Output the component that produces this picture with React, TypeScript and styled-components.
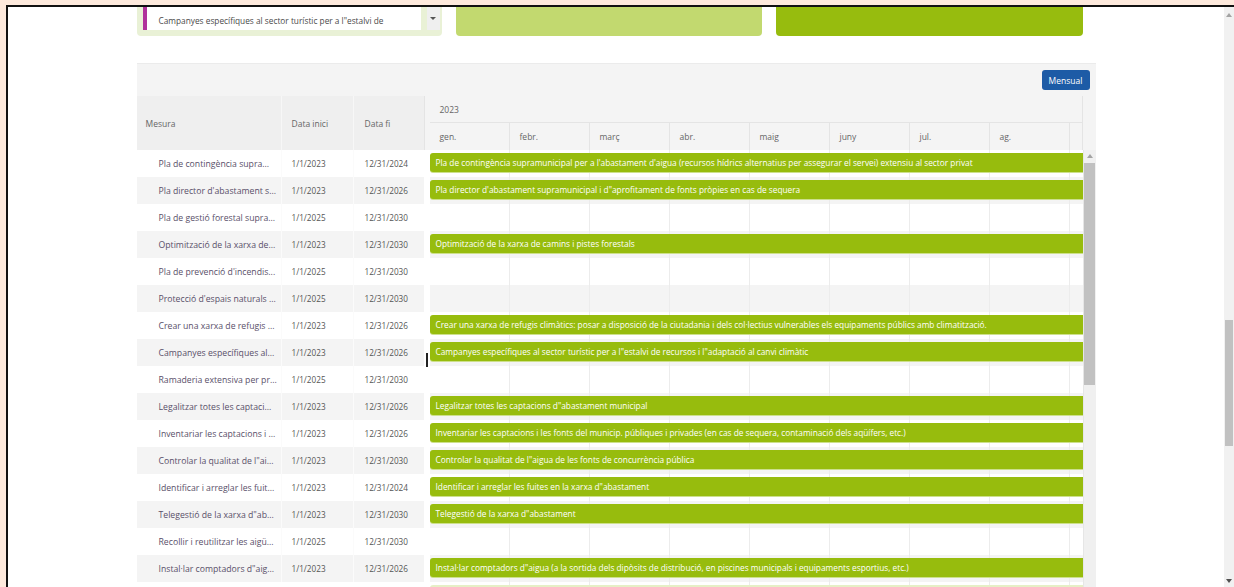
import React from "react";
import styled, { createGlobalStyle } from "styled-components";

const Global = createGlobalStyle`
  html, body { margin: 0; padding: 0; background: #fde9dc; overflow: hidden; }
  body { font-family: "Open Sans", "Noto Sans", sans-serif; }
  * { box-sizing: border-box; }
`;

type Measure = {
  short: string;
  start: string;
  end: string;
  label?: string;
  months: number;
};

const measures: Measure[] = [
  { short: "Pla de contingència supra...", start: "1/1/2023", end: "12/31/2024", months: 24, label: "Pla de contingència supramunicipal per a l'abastament d'aigua (recursos hídrics alternatius per assegurar el servei) extensiu al sector privat" },
  { short: "Pla director d'abastament s...", start: "1/1/2023", end: "12/31/2026", months: 48, label: "Pla director d'abastament supramunicipal i d\"aprofitament de fonts pròpies en cas de sequera" },
  { short: "Pla de gestió forestal supra...", start: "1/1/2025", end: "12/31/2030", months: 72 },
  { short: "Optimització de la xarxa de...", start: "1/1/2023", end: "12/31/2030", months: 96, label: "Optimització de la xarxa de camins i pistes forestals" },
  { short: "Pla de prevenció d'incendis...", start: "1/1/2025", end: "12/31/2030", months: 72 },
  { short: "Protecció d'espais naturals ...", start: "1/1/2025", end: "12/31/2030", months: 72 },
  { short: "Crear una xarxa de refugis ...", start: "1/1/2023", end: "12/31/2026", months: 48, label: "Crear una xarxa de refugis climàtics: posar a disposició de la ciutadania i dels col·lectius vulnerables els equipaments públics amb climatització." },
  { short: "Campanyes específiques al...", start: "1/1/2023", end: "12/31/2026", months: 48, label: "Campanyes específiques al sector turístic per a l\"estalvi de recursos i l\"adaptació al canvi climàtic" },
  { short: "Ramaderia extensiva per pr...", start: "1/1/2025", end: "12/31/2030", months: 72 },
  { short: "Legalitzar totes les captaci...", start: "1/1/2023", end: "12/31/2026", months: 48, label: "Legalitzar totes les captacions d\"abastament municipal" },
  { short: "Inventariar les captacions i ...", start: "1/1/2023", end: "12/31/2026", months: 48, label: "Inventariar les captacions i les fonts del municip. públiques i privades (en cas de sequera, contaminació dels aqüífers, etc.)" },
  { short: "Controlar la qualitat de l\"ai...", start: "1/1/2023", end: "12/31/2030", months: 96, label: "Controlar la qualitat de l\"aigua de les fonts de concurrència pública" },
  { short: "Identificar i arreglar les fuit...", start: "1/1/2023", end: "12/31/2024", months: 24, label: "Identificar i arreglar les fuites en la xarxa d\"abastament" },
  { short: "Telegestió de la xarxa d\"ab...", start: "1/1/2023", end: "12/31/2030", months: 96, label: "Telegestió de la xarxa d\"abastament" },
  { short: "Recollir i reutilitzar les aigü...", start: "1/1/2025", end: "12/31/2030", months: 72 },
  { short: "Instal·lar comptadors d\"aig...", start: "1/1/2023", end: "12/31/2026", months: 48, label: "Instal·lar comptadors d\"aigua (a la sortida dels dipòsits de distribució, en piscines municipals i equipaments esportius, etc.)" },
];

/* the row that sits just under the fold: only its top edge shows */
const PEEK_ROW_INDEX = measures.length;

const months = ["gen.", "febr.", "març", "abr.", "maig", "juny", "jul.", "ag.", ""];
const MONTH_W = 80;

/* ---------- page frame ---------- */

const Frame = styled.div`
  margin: 5px 0 0 6px;
  border-top: 2px solid #111;
  border-left: 2px solid #111;
  height: 582px;
  display: flex;
  background: #fff;
`;

const Page = styled.main`
  flex: 1;
  overflow: hidden;
  position: relative;
`;

const Container = styled.div`
  width: 959px;
  margin: 0 auto;
`;

/* ---------- browser scrollbar ---------- */

const PageScroll = styled.div`
  width: 10px;
  background: #f1f1f1;
  display: flex;
  flex-direction: column;
  align-items: center;
`;

const Arrow = styled.span<{ $down?: boolean }>`
  width: 0;
  height: 0;
  border-left: 3px solid transparent;
  border-right: 3px solid transparent;
  ${(p) =>
    p.$down
      ? "border-top: 4px solid #505050;"
      : "border-bottom: 4px solid #a3a3a3;"}
`;

const PageThumb = styled.div`
  width: 8px;
  height: 126px;
  margin-top: 303px;
  background: #c1c1c1;
`;

const Spacer = styled.div`
  flex: 1;
`;

/* ---------- cards ---------- */

const CardRow = styled.div`
  display: grid;
  grid-template-columns: 305px 306px 307px;
  column-gap: 14px;
  width: 946px;
`;

const Card = styled.div<{ $bg: string }>`
  height: 29px;
  background: ${(p) => p.$bg};
  border-radius: 0 0 4px 4px;
`;

const SelectCard = styled(Card)`
  display: flex;
  padding: 0 1px 0 6px;
`;

const SelectBox = styled.div`
  width: 278px;
  height: 23px;
  background: #fff;
  border-left: 4px solid #b0329b;
  padding: 0 0 4px 12px;
  display: flex;
  align-items: flex-end;
  font-size: 8.3px;
  color: #4a4a4a;
  white-space: nowrap;
  overflow: hidden;
`;

const DropButton = styled.div`
  width: 13px;
  height: 23px;
  margin-left: 6px;
  background: #efefef;
  display: flex;
  align-items: center;
  justify-content: center;
`;

const Caret = styled.span`
  width: 0;
  height: 0;
  border-left: 3px solid transparent;
  border-right: 3px solid transparent;
  border-top: 3px solid #555;
`;

/* ---------- gantt ---------- */

const Gantt = styled.section`
  margin-top: 27px;
  background: #fff;
`;

const Toolbar = styled.div`
  height: 33px;
  background: #f4f4f4;
  border-top: 1px solid #ebebeb;
  display: flex;
  align-items: center;
  justify-content: flex-end;
  padding-right: 6px;
`;

const ViewButton = styled.button`
  width: 48px;
  height: 20px;
  border: none;
  border-radius: 3px;
  background: #1d5ba6;
  color: #fff;
  font-family: inherit;
  font-size: 8.5px;
  padding: 0;
`;

const HeaderRow = styled.div`
  display: flex;
  height: 54px;
`;

const BodyRow = styled.div`
  display: flex;
  height: 440px;
`;

const GridHead = styled.div`
  width: 287px;
  background: #efefef;
  display: flex;
`;

const HeadCell = styled.div<{ $w: number; $pad: number }>`
  width: ${(p) => p.$w}px;
  padding-left: ${(p) => p.$pad}px;
  display: flex;
  align-items: center;
  font-size: 8.5px;
  color: #666;
  & + & {
    border-left: 1px solid #f7f7f7;
  }
`;

const SplitHead = styled.div`
  width: 6px;
  background: #f4f4f4;
  border-left: 1px solid #e4e4e4;
`;

const TimeHead = styled.div`
  width: 653px;
  background: #f4f4f4;
  border-right: 1px solid #e4e4e4;
  display: flex;
  flex-direction: column;
`;

const YearRow = styled.div`
  height: 27px;
  border-bottom: 1px solid #e4e4e4;
  display: flex;
  align-items: center;
  padding-left: 10px;
  font-size: 8.5px;
  color: #666;
`;

const MonthRow = styled.div`
  height: 27px;
  display: flex;
  overflow: hidden;
`;

const MonthCell = styled.div`
  flex: 0 0 ${MONTH_W}px;
  border-right: 1px solid #e4e4e4;
  display: flex;
  align-items: center;
  padding-left: 10px;
  font-size: 8.5px;
  color: #666;
`;

const ScrollHead = styled.div`
  width: 13px;
  background: #f4f4f4;
`;

const GridBody = styled.div`
  width: 287px;
`;

const GridRow = styled.div<{ $alt: boolean }>`
  height: 27px;
  display: flex;
  background: ${(p) => (p.$alt ? "#f4f4f4" : "#fff")};
`;

const Cell = styled.div<{ $w: number; $pad: number; $size?: number; $tone?: string }>`
  width: ${(p) => p.$w}px;
  padding-left: ${(p) => p.$pad}px;
  display: flex;
  align-items: center;
  font-size: ${(p) => p.$size ?? 8.2}px;
  color: ${(p) => p.$tone ?? "#555"};
  white-space: nowrap;
  overflow: hidden;
  & + & {
    border-left: 1px solid #fbfbfb;
  }
`;

const Splitter = styled.div`
  width: 6px;
  background: #fff;
  position: relative;
`;

const Cursor = styled.span`
  position: absolute;
  left: 2px;
  top: 203px;
  width: 2px;
  height: 14px;
  background: #222;
`;

const TimeBody = styled.div`
  width: 653px;
  overflow: hidden;
`;

const TimeRow = styled.div<{ $alt: boolean }>`
  height: 27px;
  padding-top: 3px;
  background-color: ${(p) => (p.$alt ? "#f4f4f4" : "#fff")};
  background-image: repeating-linear-gradient(
    to right,
    transparent 0 79px,
    #ececec 79px 80px
  );
`;

const Bar = styled.div<{ $light?: boolean }>`
  height: 19px;
  border-radius: 3px;
  background: ${(p) => (p.$light ? "#e6efc6" : "#97bc0d")};
  box-shadow: 0 1px 0 #cde08c;
  color: #fff;
  font-size: 8.3px;
  line-height: 19px;
  padding-left: 6px;
  white-space: nowrap;
  overflow: hidden;
`;

const VScroll = styled.div`
  width: 13px;
  background: #f0f0f0;
  border-left: 1px solid #e6e6e6;
  display: flex;
  flex-direction: column;
  align-items: center;
  padding-top: 4px;
`;

const VThumb = styled.div`
  width: 11px;
  height: 222px;
  margin-top: 5px;
  background: #c1c1c1;
`;

export default function App() {
  return (
    <>
      <Global />
      <Frame>
        <Page>
          <Container>
            <CardRow>
              <SelectCard $bg="#e9f1d6">
                <SelectBox>
                  Campanyes específiques al sector turístic per a l"estalvi de
                </SelectBox>
                <DropButton>
                  <Caret />
                </DropButton>
              </SelectCard>
              <Card $bg="#c2d96f" />
              <Card $bg="#97bc0e" />
            </CardRow>

            <Gantt>
              <Toolbar>
                <ViewButton>Mensual</ViewButton>
              </Toolbar>

              <HeaderRow>
                <GridHead>
                  <HeadCell $w={144} $pad={9}>Mesura</HeadCell>
                  <HeadCell $w={72} $pad={10}>Data inici</HeadCell>
                  <HeadCell $w={71} $pad={11}>Data fi</HeadCell>
                </GridHead>
                <SplitHead />
                <TimeHead>
                  <YearRow>2023</YearRow>
                  <MonthRow>
                    {months.map((m, i) => (
                      <MonthCell key={i}>{m}</MonthCell>
                    ))}
                  </MonthRow>
                </TimeHead>
                <ScrollHead />
              </HeaderRow>

              <BodyRow>
                <GridBody>
                  {measures.map((m, i) => (
                    <GridRow key={i} $alt={i % 2 === 1}>
                      <Cell $w={144} $pad={22} $size={8.7} $tone="#594f69">{m.short}</Cell>
                      <Cell $w={72} $pad={10}>{m.start}</Cell>
                      <Cell $w={71} $pad={11}>{m.end}</Cell>
                    </GridRow>
                  ))}
                  <GridRow $alt={PEEK_ROW_INDEX % 2 === 1} />
                </GridBody>
                <Splitter>
                  <Cursor />
                </Splitter>
                <TimeBody>
                  {measures.map((m, i) => (
                    <TimeRow key={i} $alt={i % 2 === 1}>
                      {m.label && (
                        <Bar style={{ width: m.months * MONTH_W }}>{m.label}</Bar>
                      )}
                    </TimeRow>
                  ))}
                  <TimeRow $alt={PEEK_ROW_INDEX % 2 === 1}>
                    <Bar $light style={{ width: 48 * MONTH_W }} />
                  </TimeRow>
                </TimeBody>
                <VScroll>
                  <Arrow />
                  <VThumb />
                </VScroll>
              </BodyRow>
            </Gantt>
          </Container>
        </Page>
        <PageScroll>
          <Arrow style={{ marginTop: 6 }} />
          <PageThumb />
          <Spacer />
          <Arrow $down style={{ marginBottom: 4 }} />
        </PageScroll>
      </Frame>
    </>
  );
}
